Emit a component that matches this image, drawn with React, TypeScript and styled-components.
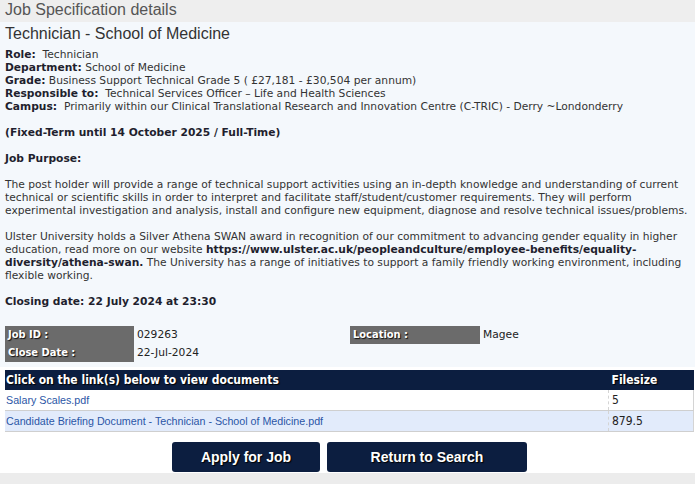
import styled, { createGlobalStyle } from 'styled-components'

const GlobalStyle = createGlobalStyle`
  body {
    margin: 0;
    background: #ececec;
  }
`

const body = `Tahoma, "DejaVu Sans", Verdana, sans-serif`
const narrow = `Tahoma, "DejaVu Sans Condensed", "DejaVu Sans", sans-serif`
const arial = `"Liberation Sans", Arial, sans-serif`

const Page = styled.div`
  width: 695px;
  background: #ececec;
  padding-bottom: 12px;
`

const HeaderBar = styled.div`
  height: 22px;
  line-height: 20px;
  padding-left: 5px;
  font-family: ${arial};
  font-size: 16px;
  color: #555;
  background: #eeeeee;
`

const Spec = styled.div`
  background: #f4f8fc;
  padding: 2px 1px 5px 5px;
  font-family: ${body};
  font-size: 10.7px;
  line-height: 13px;
  color: #333;
`

const Title = styled.h2`
  margin: 0 0 4px;
  font-family: ${arial};
  font-size: 16px;
  font-weight: normal;
  line-height: 20px;
  color: #333;
`

const Line = styled.div``

const Label = styled.b`
  color: #1f1f2e;
`

const Para = styled.p<{ $bold?: boolean }>`
  margin: 13px 0 0;
  font-weight: ${(p) => (p.$bold ? 'bold' : 'normal')};
  color: ${(p) => (p.$bold ? '#1f1f2e' : '#333')};
`

const Strong = styled.b`
  color: #1f1f2e;
`

const InfoGrid = styled.div`
  display: grid;
  grid-template-columns: 131px 214px 132px 1fr;
  grid-auto-rows: 18px;
  margin-top: 18px;
  font-family: ${body};
  font-size: 10.7px;
  line-height: 18px;
`

const InfoLabel = styled.div`
  margin-right: 2px;
  padding-left: 3px;
  background: #6b6b6b;
  color: #fff;
  font-family: ${narrow};
  font-size: 11px;
  font-weight: bold;
  text-shadow: 1px 1px 1px #111;
`

const InfoValue = styled.div`
  padding-left: 1px;
  color: #222;
`

const Docs = styled.div`
  background: #ffffff;
  padding: 3px 1px 1px 5px;
`

const DocTable = styled.table`
  width: 100%;
  border-collapse: collapse;
  font-family: ${narrow};
  font-size: 11px;
`

const HeadCell = styled.th<{ $narrow?: boolean }>`
  height: 20px;
  padding: 0 0 0 ${(p) => (p.$narrow ? '3px' : '1px')};
  text-align: left;
  background: #0c1e40;
  color: #fff;
  font-size: 12px;
  font-weight: bold;
  text-shadow: 1px 1px 1px #000;
  width: ${(p) => (p.$narrow ? '82px' : 'auto')};
`

const Row = styled.tr<{ $alt?: boolean }>`
  background: ${(p) => (p.$alt ? '#e2ebfb' : '#ffffff')};
`

const Cell = styled.td<{ $size?: boolean }>`
  height: 20px;
  padding: 0 0 0 ${(p) => (p.$size ? '3px' : '1px')};
  border-bottom: 1px solid #cfcfcf;
  border-left: ${(p) => (p.$size ? '1px dashed #d4d4d4' : 'none')};
  border-right: ${(p) => (p.$size ? '1px solid #d4d4d4' : 'none')};
  font-size: 12px;
  color: #222;
`

const DocLink = styled.a`
  font-family: ${arial};
  font-size: 10.7px;
  color: #2b56a6;
  text-decoration: none;
`

const Actions = styled.div`
  display: flex;
  justify-content: center;
  gap: 7px;
  padding-top: 10px;
`

const Button = styled.button<{ $w: number }>`
  width: ${(p) => p.$w}px;
  height: 30px;
  border: none;
  border-radius: 3px;
  background: #0c1e40;
  color: #fff;
  font-family: ${arial};
  font-size: 14px;
  font-weight: bold;
  text-shadow: 1px 1px 1px #000;
  cursor: pointer;
`

const App = () => (
  <>
    <GlobalStyle />
    <Page>
      <HeaderBar>Job Specification details</HeaderBar>
      <Spec>
        <Title>Technician - School of Medicine</Title>
        <Line>
          <Label>Role:</Label>&nbsp; Technician
        </Line>
        <Line>
          <Label>Department:</Label> School of Medicine
        </Line>
        <Line>
          <Label>Grade:</Label> Business Support Technical Grade 5 ( £27,181 - £30,504 per annum)
        </Line>
        <Line>
          <Label>Responsible to:</Label>&nbsp; Technical Services Officer – Life and Health Sciences
        </Line>
        <Line>
          <Label>Campus:</Label>&nbsp; Primarily within our Clinical Translational Research and Innovation Centre
          (C-TRIC) - Derry ~Londonderry
        </Line>
        <Para $bold>(Fixed-Term until 14 October 2025 / Full-Time)</Para>
        <Para $bold>Job Purpose:</Para>
        <Para>
          The post holder will provide a range of technical support activities using an in-depth knowledge
          and understanding of current technical or scientific skills in order to interpret and facilitate
          staff/student/customer requirements. They will perform experimental investigation and analysis,
          install and configure new equipment, diagnose and resolve technical issues/problems.
        </Para>
        <Para>
          Ulster University holds a Silver Athena SWAN award in recognition of our commitment to advancing
          gender equality in higher education, read more on our website{' '}
          <Strong>https://www.ulster.ac.uk/peopleandculture/employee-benefits/equality-diversity/athena-swan.</Strong>{' '}
          The University has a range of initiatives to support a family friendly working environment,
          including flexible working.
        </Para>
        <Para $bold>Closing date: 22 July 2024 at 23:30</Para>
        <InfoGrid>
          <InfoLabel>Job ID :</InfoLabel>
          <InfoValue>029263</InfoValue>
          <InfoLabel>Location :</InfoLabel>
          <InfoValue>Magee</InfoValue>
          <InfoLabel>Close Date :</InfoLabel>
          <InfoValue>22-Jul-2024</InfoValue>
        </InfoGrid>
      </Spec>
      <Docs>
        <DocTable>
          <thead>
            <tr>
              <HeadCell>Click on the link(s) below to view documents</HeadCell>
              <HeadCell $narrow>Filesize</HeadCell>
            </tr>
          </thead>
          <tbody>
            <Row>
              <Cell>
                <DocLink href="#">Salary Scales.pdf</DocLink>
              </Cell>
              <Cell $size>5</Cell>
            </Row>
            <Row $alt>
              <Cell>
                <DocLink href="#">Candidate Briefing Document - Technician - School of Medicine.pdf</DocLink>
              </Cell>
              <Cell $size>879.5</Cell>
            </Row>
          </tbody>
        </DocTable>
        <Actions>
          <Button $w={148}>Apply for Job</Button>
          <Button $w={200}>Return to Search</Button>
        </Actions>
      </Docs>
    </Page>
  </>
)

export default App
